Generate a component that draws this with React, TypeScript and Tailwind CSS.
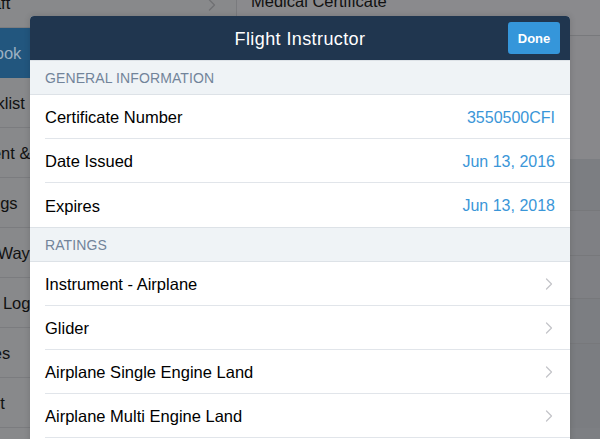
import { ChevronRight } from "lucide-react";

const sidebarItems = [
  { label: "Aircraft", chevron: true },
  { label: "Logbook", active: true },
  { label: "Checklist" },
  { label: "Student & Instructor" },
  { label: "Settings" },
  { label: "User Waypoints" },
  { label: "Flight Log" },
  { label: "Routes" },
  { label: "Import" },
  { label: "Documents" },
];

const generalInfo = [
  { label: "Certificate Number", value: "3550500CFI" },
  { label: "Date Issued", value: "Jun 13, 2016" },
  { label: "Expires", value: "Jun 13, 2018" },
];

const ratings = [
  "Instrument - Airplane",
  "Glider",
  "Airplane Single Engine Land",
  "Airplane Multi Engine Land",
  "Rotorcraft Helicopter",
];

function SectionHeader({ title }: { title: string }) {
  return (
    <div className="flex h-[35px] items-center border-y border-[#dde2e7] bg-[#eff3f6] px-[15px] pt-[2px]">
      <span className="text-[14px] uppercase tracking-[0.1px] text-[#72849a]">
        {title}
      </span>
    </div>
  );
}

function Row({
  label,
  value,
  last,
}: {
  label: string;
  value?: string;
  last?: boolean;
}) {
  return (
    <div className="bg-white pl-[15px]">
      <div
        className={`flex h-[44px] items-center justify-between pr-[15px] pt-[2px] ${
          last ? "" : "border-b border-[#e1e5ea]"
        }`}
      >
        <span className="text-[16.5px] text-black">{label}</span>
        {value ? (
          <span className="text-[16px] text-[#3a96d8]">{value}</span>
        ) : (
          <ChevronRight
            className="mr-[-4px] mt-[-2px] h-[20px] w-[20px] text-[#c4c5c9]"
            strokeWidth={1.5}
          />
        )}
      </div>
    </div>
  );
}

export default function App() {
  return (
    <div className="relative h-[439px] w-[600px] overflow-hidden bg-[#7d7f83] font-['Liberation_Sans',Arial,sans-serif]">
      {/* dimmed app behind the sheet */}
      <div className="flex h-full">
        <div className="ml-[-50px] mt-[-22px] w-[287px] shrink-0 border-r border-[#7a7b7e] bg-[#88898b]">
          {sidebarItems.map((item) => (
            <div
              key={item.label}
              className={`flex h-[50px] items-center justify-between border-b pl-[8px] pr-[14px] pt-[2px] ${
                item.active
                  ? "border-[#22557c] bg-[#22567e] text-[#9cb0c2]"
                  : "border-[#7b7c7f] text-[#111]"
              }`}
            >
              <span className="text-[16.5px]">{item.label}</span>
              {item.chevron && (
                <ChevronRight
                  className="mt-[2px] h-[20px] w-[20px] text-[#6f7073]"
                  strokeWidth={1.5}
                />
              )}
            </div>
          ))}
        </div>
        <div className="flex-1">
          <div className="h-[47px] border-b border-[#78797c] bg-[#8a8a8d] pl-[14px]">
            <div className="mt-[-11px] text-[16.5px] text-[#111]">
              Medical Certificate
            </div>
          </div>
          <div className="h-[123px] bg-[#88888b]" />
          <div className="h-[52px] border-b border-[#77787b] bg-[#7c7e82]" />
          <div className="h-[45px] border-b border-[#77787b] bg-[#7f8084]" />
          <div className="h-[43px] border-b border-[#77787b] bg-[#7f8084]" />
          <div className="h-[45px] border-b border-[#77787b] bg-[#7c7e82]" />
          <div className="h-[84px] bg-[#7b7d81]" />
        </div>
      </div>

      {/* sheet */}
      <div className="absolute left-[30px] top-[16px] w-[540px] overflow-hidden rounded-t-[4px] bg-white shadow-[0_0_6px_rgba(0,0,0,0.15)]">
        <div className="relative flex h-[44px] items-center justify-center bg-[#20364f] pt-[2px]">
          <span className="text-[18px] font-medium tracking-[0.4px] text-white">
            Flight Instructor
          </span>
          <button className="absolute right-[10px] top-[6px] flex h-[32px] w-[52px] items-center justify-center rounded-[3px] bg-[#3596da] pt-[1px] text-[13px] font-bold text-white">
            Done
          </button>
        </div>
        <SectionHeader title="General Information" />
        {generalInfo.map((row, i) => (
          <Row
            key={row.label}
            label={row.label}
            value={row.value}
            last={i === generalInfo.length - 1}
          />
        ))}
        <SectionHeader title="Ratings" />
        {ratings.map((r) => (
          <Row key={r} label={r} />
        ))}
      </div>
    </div>
  );
}
